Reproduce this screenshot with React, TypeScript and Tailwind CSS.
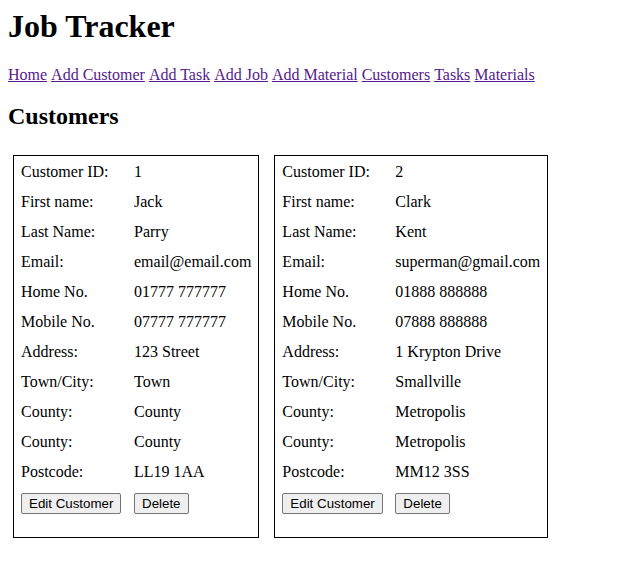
import React from "react";

type Customer = {
  id: string;
  first: string;
  last: string;
  email: string;
  home: string;
  mobile: string;
  address: string;
  town: string;
  county: string;
  county2: string;
  postcode: string;
};

const customers: Customer[] = [
  {
    id: "1",
    first: "Jack",
    last: "Parry",
    email: "email@email.com",
    home: "01777 777777",
    mobile: "07777 777777",
    address: "123 Street",
    town: "Town",
    county: "County",
    county2: "County",
    postcode: "LL19 1AA",
  },
  {
    id: "2",
    first: "Clark",
    last: "Kent",
    email: "superman@gmail.com",
    home: "01888 888888",
    mobile: "07888 888888",
    address: "1 Krypton Drive",
    town: "Smallville",
    county: "Metropolis",
    county2: "Metropolis",
    postcode: "MM12 3SS",
  },
];

const links = [
  "Home",
  "Add Customer",
  "Add Task",
  "Add Job",
  "Add Material",
  "Customers",
  "Tasks",
  "Materials",
];

function Btn({ children }: { children: React.ReactNode }) {
  return (
    <button className="justify-self-start h-[21px] px-[7px] flex items-center border border-[#767676] rounded-[2px] bg-[#efefef] font-['Liberation_Sans',Arial,sans-serif] text-[13.333px] leading-[normal] text-black">
      {children}
    </button>
  );
}

function Card({ c }: { c: Customer }) {
  const rows: [string, string][] = [
    ["Customer ID:", c.id],
    ["First name:", c.first],
    ["Last Name:", c.last],
    ["Email:", c.email],
    ["Home No.", c.home],
    ["Mobile No.", c.mobile],
    ["Address:", c.address],
    ["Town/City:", c.town],
    ["County:", c.county],
    ["County:", c.county2],
    ["Postcode:", c.postcode],
  ];
  return (
    <div className="border border-black px-[7px] pt-[7px] pb-[23px]">
      <div className="grid grid-cols-[113px_auto] gap-y-[12px] leading-[18px]">
        {rows.map(([k, v], i) => (
          <React.Fragment key={i}>
            <div>{k}</div>
            <div>{v}</div>
          </React.Fragment>
        ))}
        <Btn>Edit Customer</Btn>
        <Btn>Delete</Btn>
      </div>
    </div>
  );
}

export default function App() {
  return (
    <div className="p-2 font-['Liberation_Serif','Times_New_Roman',serif] text-[16px] leading-[normal] text-black bg-white min-h-[583px]">
      <h1 className="text-[32px] font-bold leading-[normal] mb-[21px]">Job Tracker</h1>
      <p className="flex flex-wrap gap-x-[4px]">
        {links.map((l) => (
          <a key={l} href="#" className="text-[#551a8b] underline">
            {l}
          </a>
        ))}
      </p>
      <h2 className="text-[24px] font-bold leading-[normal] mt-[19px] mb-[25px]">Customers</h2>
      <div className="flex items-start gap-[15px] pl-[5px]">
        {customers.map((c) => (
          <Card key={c.id} c={c} />
        ))}
      </div>
    </div>
  );
}
